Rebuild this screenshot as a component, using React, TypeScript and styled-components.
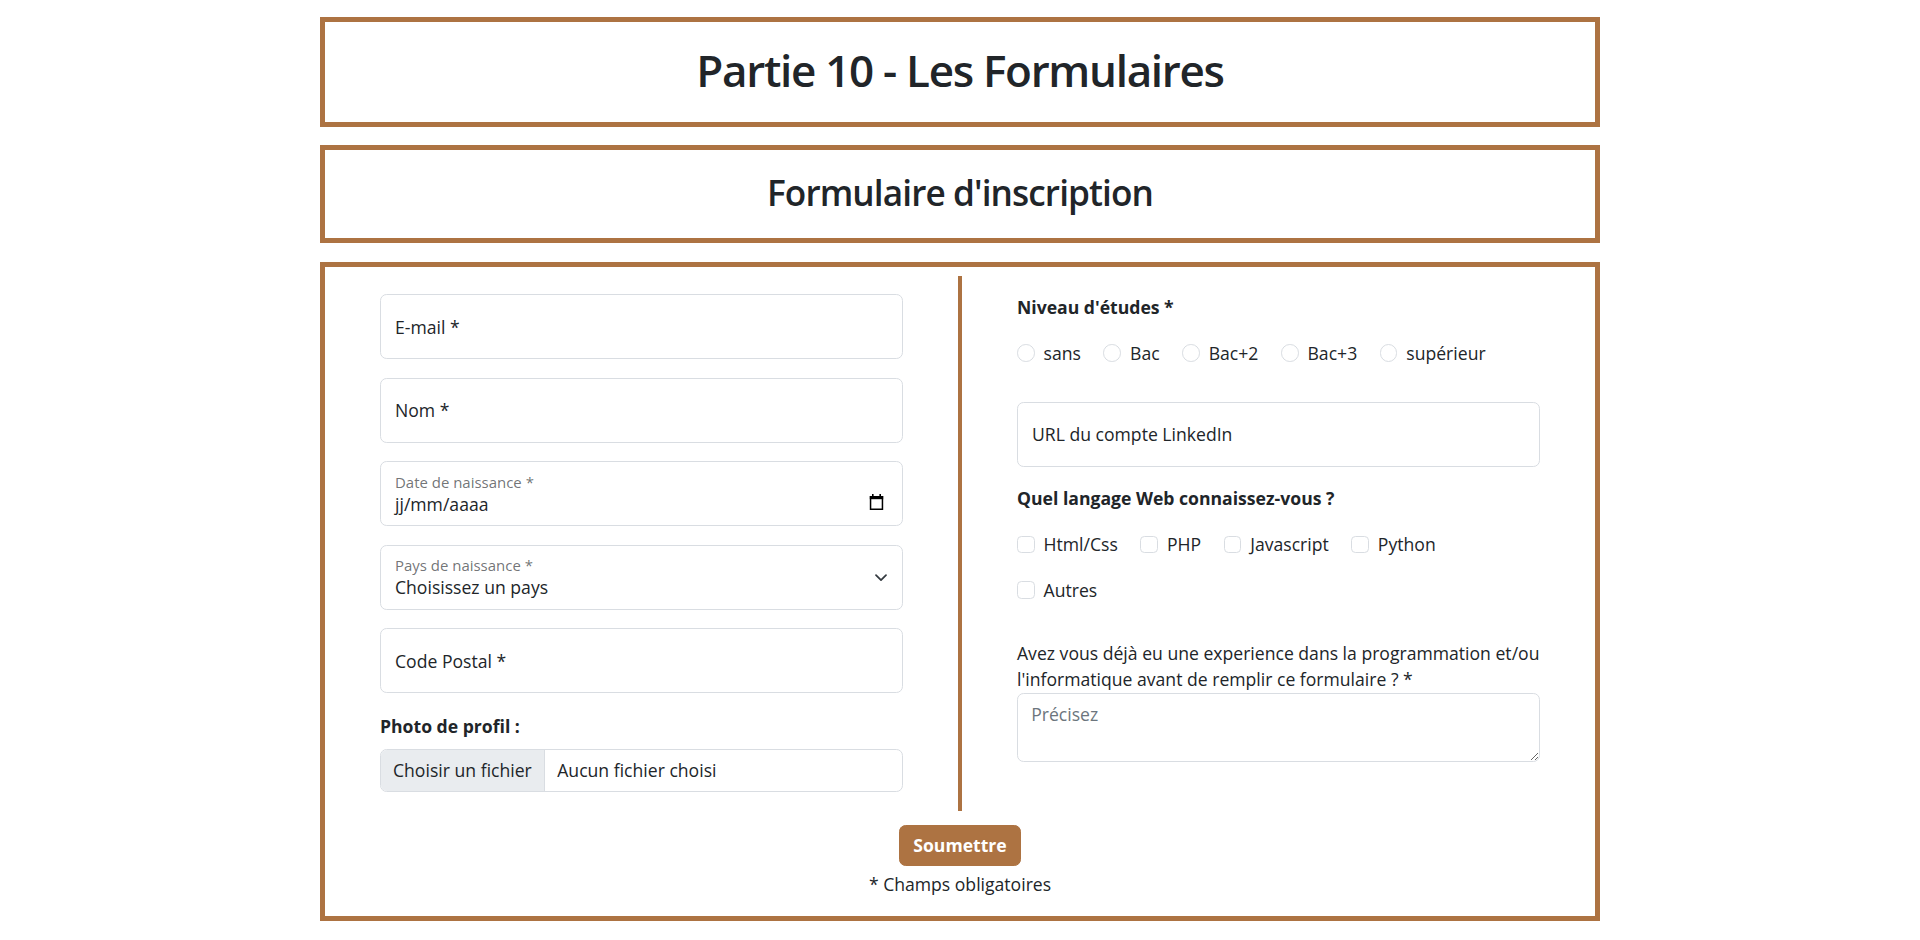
import styled, { createGlobalStyle } from 'styled-components'

const brown = '#ad7342'
const ink = '#212529'
const line = '#d9dde2'

const GlobalStyle = createGlobalStyle`
	*, *::before, *::after {
		box-sizing: border-box;
	}
	body {
		margin: 0;
		background: #fff;
		color: ${ink};
		font-family: 'Open Sans', 'Noto Sans', sans-serif;
		font-size: 17.6px;
		line-height: 1.5;
	}
`

const Page = styled.main`
	width: 1280px;
	margin: 17px auto 0;
	display: flex;
	flex-direction: column;
`

type BoxProps = {
	$height: number
	$gap: number
}

const TitleBox = styled.header<BoxProps>`
	height: ${(p) => p.$height}px;
	margin-bottom: ${(p) => p.$gap}px;
	padding-bottom: 4px;
	border: 5px solid ${brown};
	display: flex;
	align-items: center;
	justify-content: center;
`
const MainTitle = styled.h1`
	margin: 0;
	font-size: 44px;
	font-weight: 600;
	letter-spacing: -1.3px;
	line-height: 1.2;
`
const SubTitle = styled.h2`
	margin: 0;
	font-size: 35.2px;
	font-weight: 600;
	letter-spacing: -0.9px;
	line-height: 1.2;
`

const FormCard = styled.form`
	border: 5px solid ${brown};
	padding: 9px 0 18px;
	display: flex;
	flex-direction: column;
	align-items: center;
`
const Columns = styled.div`
	align-self: stretch;
	display: grid;
	grid-template-columns: 637px 1fr;
`
const LeftCol = styled.div`
	border-right: 4px solid ${brown};
	padding: 18px 55px 19px 55px;
	display: flex;
	flex-direction: column;
`
const RightCol = styled.div`
	padding: 18px 55px 0 55px;
	display: flex;
	flex-direction: column;
`

const TextInput = styled.input`
	display: block;
	width: 100%;
	height: 65px;
	margin: 0 0 18.5px;
	padding: 0 14px;
	border: 1px solid ${line};
	border-radius: 6.6px;
	font: inherit;
	color: ${ink};
	background: #fff;
	&::placeholder {
		color: ${ink};
	}
`
const StackedField = styled.div`
	height: 65px;
	margin-bottom: 18.5px;
	padding: 0 15px 0 14px;
	border: 1px solid ${line};
	border-radius: 6.6px;
	display: flex;
	align-items: center;
	gap: 10px;
`
const StackedBody = styled.div`
	flex: 1;
	align-self: stretch;
	padding-top: 10.5px;
	display: flex;
	flex-direction: column;
`
const FloatLabel = styled.label`
	font-size: 14.96px;
	line-height: 19px;
	color: rgba(33, 37, 41, 0.65);
`
const FieldValue = styled.span`
	line-height: 24px;
`
const PlainSelect = styled.select`
	appearance: none;
	border: none;
	padding: 0;
	margin: 0;
	background: transparent;
	font: inherit;
	line-height: 24px;
	color: ${ink};
	outline: none;
`
const IconSlot = styled.span<{ $shift: number }>`
	display: flex;
	margin-top: ${(p) => p.$shift}px;
	margin-right: ${(p) => (p.$shift > 10 ? 3 : 0)}px;
`

const BoldLabel = styled.div<{ $top?: number; $bottom?: number }>`
	font-weight: 700;
	margin-top: ${(p) => p.$top ?? 0}px;
	margin-bottom: ${(p) => p.$bottom ?? 0}px;
`
const FileBox = styled.div`
	height: 43px;
	border: 1px solid ${line};
	border-radius: 6.6px;
	overflow: hidden;
	display: flex;
	align-items: center;
`
const FileButton = styled.span`
	height: 100%;
	padding: 0 12px;
	background: #e9ecef;
	border-right: 1px solid ${line};
	display: flex;
	align-items: center;
`
const FileName = styled.span`
	padding-left: 12.5px;
`

const ChoiceRow = styled.div<{ $top: number }>`
	margin-top: ${(p) => p.$top}px;
	display: flex;
	align-items: center;
	line-height: 26.4px;
`
const Choice = styled.label`
	display: inline-flex;
	align-items: center;
	gap: 9px;
	margin-right: 22.5px;
`
const Tick = styled.input<{ $round?: boolean }>`
	appearance: none;
	width: 17.6px;
	height: 17.6px;
	margin: 0;
	border: 1px solid ${line};
	border-radius: ${(p) => (p.$round ? '50%' : '4.4px')};
	background: #fff;
`

const Question = styled.p`
	margin: 38px 0 0;
	line-height: 25.5px;
`
const Notes = styled.textarea`
	display: block;
	width: 100%;
	height: 69px;
	margin-top: 1px;
	padding: 6.6px 13.2px;
	border: 1px solid ${line};
	border-radius: 6.6px;
	font: inherit;
	color: ${ink};
	resize: vertical;
	&::placeholder {
		color: #6c757d;
	}
`

const Submit = styled.button`
	margin-top: 14px;
	padding: 6.6px 13.2px;
	border: 1px solid ${brown};
	border-radius: 6.6px;
	background: ${brown};
	color: #fff;
	font: inherit;
	font-weight: 700;
`
const Footnote = styled.p`
	margin: 5px 0 0;
`

function CalendarIcon() {
	return (
		<svg width="15" height="16" viewBox="0 0 15 16">
			<rect x="3" y="0" width="1.6" height="3" fill="#000" />
			<rect x="10.4" y="0" width="1.6" height="3" fill="#000" />
			<rect x="0.8" y="2" width="13.4" height="3.2" fill="#000" />
			<rect x="1.55" y="2.75" width="11.9" height="12.5" fill="none" stroke="#000" strokeWidth="1.5" />
		</svg>
	)
}

function ChevronIcon() {
	return (
		<svg width="12" height="8" viewBox="0 0 12 8">
			<polyline points="1,1.2 6,6.2 11,1.2" fill="none" stroke="#343a40" strokeWidth="1.7" strokeLinecap="round" strokeLinejoin="round" />
		</svg>
	)
}

const niveaux = ['sans', 'Bac', 'Bac+2', 'Bac+3', 'supérieur']
const langages = ['Html/Css', 'PHP', 'Javascript', 'Python']

export default function App() {
	return (
		<>
			<GlobalStyle />
			<Page>
				<TitleBox $height={110} $gap={18}>
					<MainTitle>Partie 10 - Les Formulaires</MainTitle>
				</TitleBox>
				<TitleBox $height={98} $gap={19}>
					<SubTitle>Formulaire d'inscription</SubTitle>
				</TitleBox>

				<FormCard onSubmit={(e) => e.preventDefault()}>
					<Columns>
						<LeftCol>
							<TextInput type="email" placeholder="E-mail *" />
							<TextInput type="text" placeholder="Nom *" />
							<StackedField>
								<StackedBody>
									<FloatLabel>Date de naissance *</FloatLabel>
									<FieldValue>jj/mm/aaaa</FieldValue>
								</StackedBody>
								<IconSlot $shift={17}>
									<CalendarIcon />
								</IconSlot>
							</StackedField>
							<StackedField>
								<StackedBody>
									<FloatLabel>Pays de naissance *</FloatLabel>
									<PlainSelect defaultValue="">
										<option value="">Choisissez un pays</option>
										<option value="fr">France</option>
										<option value="be">Belgique</option>
									</PlainSelect>
								</StackedBody>
								<IconSlot $shift={1}>
									<ChevronIcon />
								</IconSlot>
							</StackedField>
							<TextInput type="text" placeholder="Code Postal *" />
							<BoldLabel $top={1} $bottom={10}>
								Photo de profil :
							</BoldLabel>
							<FileBox>
								<FileButton>Choisir un fichier</FileButton>
								<FileName>Aucun fichier choisi</FileName>
							</FileBox>
						</LeftCol>

						<RightCol>
							<BoldLabel>Niveau d'études *</BoldLabel>
							<ChoiceRow $top={19.5}>
								{niveaux.map((n) => (
									<Choice key={n}>
										<Tick type="radio" name="niveau" $round />
										{n}
									</Choice>
								))}
							</ChoiceRow>
							<TextInput type="url" placeholder="URL du compte LinkedIn" style={{ marginTop: 35.5 }} />
							<BoldLabel>Quel langage Web connaissez-vous ?</BoldLabel>
							<ChoiceRow $top={19.5}>
								{langages.map((l) => (
									<Choice key={l}>
										<Tick type="checkbox" />
										{l}
									</Choice>
								))}
							</ChoiceRow>
							<ChoiceRow $top={19}>
								<Choice>
									<Tick type="checkbox" />
									Autres
								</Choice>
							</ChoiceRow>
							<Question>
								Avez vous déjà eu une experience dans la programmation et/ou l'informatique avant de remplir ce formulaire ? *
							</Question>
							<Notes placeholder="Précisez" />
						</RightCol>
					</Columns>
					<Submit type="submit">Soumettre</Submit>
					<Footnote>* Champs obligatoires</Footnote>
				</FormCard>
			</Page>
		</>
	)
}
